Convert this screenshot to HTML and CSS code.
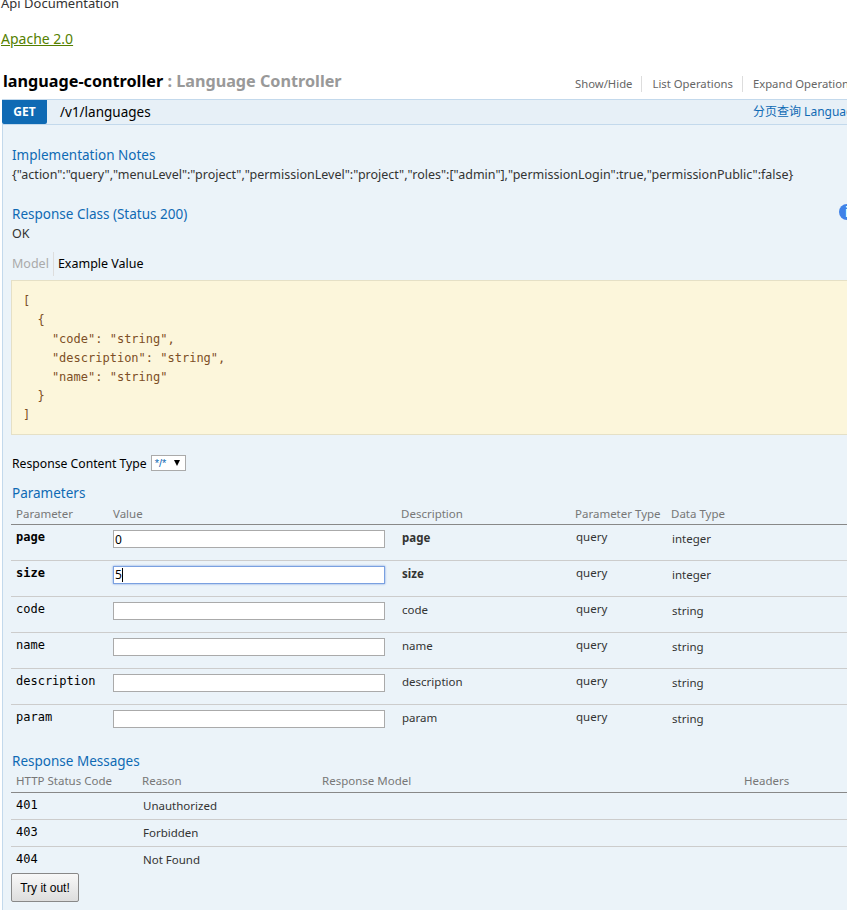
FILE: index.html
```html
<!DOCTYPE html>
<html lang="en">
<head>
    <meta charset="UTF-8">
    <meta name="viewport" content="width=device-width, initial-scale=1.0">
    <title>Api Documentation</title>
    <link rel="stylesheet" href="styles.css">
</head>
<body>
    <div id="swagger-ui">
        <div class="info">
            <div class="info-desc">Api Documentation</div>
            <a class="license" href="#">Apache 2.0</a>
        </div>

        <div class="resource-head">
            <h2><span class="res-name">language-controller</span> <span class="res-desc">: Language Controller</span></h2>
            <ul class="res-links">
                <li>Show/Hide</li>
                <li>List Operations</li>
                <li>Expand Operations</li>
            </ul>
        </div>

        <div class="op-heading">
            <span class="http-method">GET</span>
            <span class="op-path">/v1/languages</span>
            <span class="op-summary">分页查询 Language</span>
        </div>

        <div class="op-content">
            <h4>Implementation Notes</h4>
            <p class="notes">{"action":"query","menuLevel":"project","permissionLevel":"project","roles":["admin"],"permissionLogin":true,"permissionPublic":false}</p>

            <h4 class="response-class">Response Class (Status 200)</h4>
            <p class="status-text">OK</p>
            <span class="info-icon">i</span>

            <div class="sig-tabs">
                <span class="sig-tab off">Model</span>
                <span class="sig-tab">Example Value</span>
            </div>
            <pre class="snippet">[
  {
    "code": "string",
    "description": "string",
    "name": "string"
  }
]</pre>

            <div class="content-type">
                <label>Response Content Type</label>
                <span class="fake-select">*/* <i class="arrow"></i></span>
            </div>

            <h4 class="params-title">Parameters</h4>
            <table class="params">
                <colgroup>
                    <col class="c-name"><col class="c-value"><col class="c-desc"><col class="c-ptype"><col>
                </colgroup>
                <thead>
                    <tr><th>Parameter</th><th>Value</th><th>Description</th><th>Parameter Type</th><th>Data Type</th></tr>
                </thead>
                <tbody>
                    <tr class="required">
                        <td class="code">page</td>
                        <td><input type="text" value="0"></td>
                        <td class="desc">page</td><td class="ptype">query</td><td class="dtype">integer</td>
                    </tr>
                    <tr class="required">
                        <td class="code">size</td>
                        <td><div class="input-focus">5<span class="caret"></span></div></td>
                        <td class="desc">size</td><td class="ptype">query</td><td class="dtype">integer</td>
                    </tr>
                    <tr>
                        <td class="code">code</td>
                        <td><input type="text"></td>
                        <td class="desc">code</td><td class="ptype">query</td><td class="dtype">string</td>
                    </tr>
                    <tr>
                        <td class="code">name</td>
                        <td><input type="text"></td>
                        <td class="desc">name</td><td class="ptype">query</td><td class="dtype">string</td>
                    </tr>
                    <tr>
                        <td class="code">description</td>
                        <td><input type="text"></td>
                        <td class="desc">description</td><td class="ptype">query</td><td class="dtype">string</td>
                    </tr>
                    <tr>
                        <td class="code">param</td>
                        <td><input type="text"></td>
                        <td class="desc">param</td><td class="ptype">query</td><td class="dtype">string</td>
                    </tr>
                </tbody>
            </table>

            <h4 class="messages-title">Response Messages</h4>
            <table class="messages">
                <colgroup>
                    <col class="c-code"><col class="c-reason"><col class="c-model"><col>
                </colgroup>
                <thead>
                    <tr><th>HTTP Status Code</th><th>Reason</th><th>Response Model</th><th>Headers</th></tr>
                </thead>
                <tbody>
                    <tr><td class="code">401</td><td class="desc">Unauthorized</td><td></td><td></td></tr>
                    <tr><td class="code">403</td><td class="desc">Forbidden</td><td></td><td></td></tr>
                    <tr><td class="code">404</td><td class="desc">Not Found</td><td></td><td></td></tr>
                </tbody>
            </table>
            <button class="try-btn">Try it out!</button>
        </div>
    </div>
</body>
</html>
```

FILE: styles.css
```css
html, body {
    margin: 0;
    padding: 0;
    height: 910px;
    overflow: hidden;
    background-color: #fff;
}

body {
    font-family: "Noto Sans", "Noto Sans CJK SC", sans-serif;
    font-size: 12.5px;
    color: #333;
}

#swagger-ui {
    width: 960px;
    margin-top: -7px;
}

.info {
    padding-left: 1px;
    font-size: 13px;
}

.info-desc {
    line-height: 20px;
    height: 20px;
}

.license {
    display: inline-block;
    margin-top: 16px;
    line-height: 20px;
    font-size: 14px;
    color: #547f00;
}

.resource-head {
    display: flex;
    align-items: flex-end;
    height: 33px;
    margin-top: 17px;
    padding-left: 3px;
}

.resource-head h2 {
    margin: 0;
    width: 572px;
    font-size: 16.2px;
    line-height: 24px;
    padding-bottom: 6px;
    font-weight: 700;
    color: #000;
}

.res-desc {
    color: #999;
}

.res-links {
    display: flex;
    list-style: none;
    margin: 0 0 7px;
    padding: 0;
    color: #666;
    font-size: 11.3px;
    line-height: 16px;
}

.res-links li {
    padding-right: 9px;
    margin-right: 10px;
    border-right: 1px solid #ddd;
}

.res-links li:last-child {
    border-right: none;
}

.op-heading {
    display: flex;
    align-items: stretch;
    height: 24px;
    margin-left: 2px;
    background-color: #e7f0f7;
    border-top: 1px solid #c3d9ec;
    border-bottom: 1px solid #c3d9ec;
}

.http-method {
    width: 45px;
    text-align: center;
    background-color: #0f6ab4;
    color: #fff;
    font-weight: 700;
    font-size: 12px;
    line-height: 24px;
    border-radius: 0 0 2px 2px;
}

.op-path {
    width: 693px;
    padding-left: 13px;
    color: #000;
    font-size: 13.5px;
    line-height: 24px;
}

.op-summary {
    color: #0f6ab4;
    font-size: 12px;
    line-height: 24px;
    white-space: nowrap;
}

.op-content {
    position: relative;
    margin-left: 2px;
    padding: 21px 0 0 9px;
    height: 800px;
    background-color: #ebf3f9;
    border-left: 1px solid #c3d9ec;
}

.op-content h4 {
    margin: 0;
    font-size: 13.5px;
    font-weight: 400;
    line-height: 18px;
    color: #0f6ab4;
}

.notes {
    margin: 2px 0 0;
    line-height: 18px;
    color: #333;
    white-space: nowrap;
}

.op-content .response-class {
    margin-top: 21px;
}

.status-text {
    margin: 2px 0 0;
    line-height: 18px;
}

.info-icon {
    position: absolute;
    left: 836px;
    top: 79px;
    width: 16px;
    height: 16px;
    border-radius: 50%;
    background-color: #3f82e8;
    color: #fff;
    font: 700 14px/16px "Liberation Sans", sans-serif;
    text-align: center;
}

.sig-tabs {
    display: flex;
    margin-top: 9px;
    height: 24px;
    line-height: 24px;
}

.sig-tab {
    color: #000;
    padding-left: 4px;
}

.sig-tab.off {
    color: #aaa;
    padding-left: 0;
    padding-right: 4px;
    border-right: 1px solid #ddd;
}

.snippet {
    margin: 4px 0 0 -1px;
    width: 880px;
    height: 155px;
    box-sizing: border-box;
    padding: 11px 11px;
    background-color: #fcf6db;
    border: 1px solid #e5e0c6;
    font-family: "DejaVu Sans Mono", monospace;
    font-size: 12px;
    line-height: 19px;
    color: #7d4f26;
}

.content-type {
    display: flex;
    align-items: center;
    margin-top: 19px;
    height: 18px;
    font-size: 12.2px;
    color: #000;
}

.fake-select {
    box-sizing: border-box;
    display: flex;
    align-items: center;
    justify-content: space-between;
    width: 35px;
    height: 16px;
    margin-left: 4px;
    padding: 0 5px 0 3px;
    background-color: #fff;
    border: 1px solid #aaa;
    font-family: "Liberation Sans", sans-serif;
    font-size: 11px;
    color: #0f6ab4;
}

.arrow {
    width: 0;
    height: 0;
    border-left: 3.5px solid transparent;
    border-right: 3.5px solid transparent;
    border-top: 6px solid #000;
}

.op-content .params-title {
    margin-top: 12px;
}

table {
    width: 880px;
    margin-left: -1px;
    table-layout: fixed;
    border-collapse: collapse;
}

th {
    padding: 0 0 0 5px;
    height: 22px;
    text-align: left;
    font-weight: 400;
    font-size: 11.5px;
    color: #777;
    border-bottom: 1px solid #888;
}

.params td {
    box-sizing: border-box;
    height: 36px;
    padding: 0 0 0 5px;
    vertical-align: top;
    border-bottom: 1px solid #ccc;
}

.params tbody tr:last-child td {
    border-bottom: none;
}

.c-name { width: 97px; }
.c-value { width: 288px; }
.c-desc { width: 174px; }
.c-ptype { width: 96px; }

td.code {
    font-family: "DejaVu Sans Mono", monospace;
    font-size: 12px;
    line-height: 16px;
    color: #000;
}

.params td.code, .messages td.code {
    padding-top: 4px;
}

.params td.desc, .params td.ptype, .params td.dtype {
    padding-left: 6px;
    font-size: 11.5px;
    line-height: 16px;
}

.params td.desc {
    padding-top: 5px;
}

.params td.ptype {
    padding-top: 4px;
}

.params td.dtype {
    padding-top: 6px;
}

.required td.code, .required td.desc {
    font-weight: 700;
}

.params input, .input-focus {
    display: block;
    box-sizing: border-box;
    width: 272px;
    height: 18px;
    margin: 5px 0 0;
    padding: 0 1px;
    background-color: #fff;
    border: 1px solid #aaa;
    border-radius: 0;
    font-family: "Noto Sans", sans-serif;
    font-size: 12px;
    line-height: 16px;
    color: #000;
}

.input-focus {
    border-color: #7aa0e0;
    box-shadow: 0 0 2px #7aa0e0;
}

.caret {
    display: inline-block;
    width: 1px;
    height: 14px;
    vertical-align: -3px;
    background-color: #000;
}

.op-content .messages-title {
    margin-top: 11px;
}

.messages td {
    box-sizing: border-box;
    height: 27px;
    padding: 0 0 0 5px;
    vertical-align: top;
    border-bottom: 1px solid #ccc;
}

.messages tbody tr:last-child td {
    border-bottom: none;
}

.c-code { width: 126px; }
.c-reason { width: 180px; }
.c-model { width: 422px; }

.messages td.desc {
    padding: 5px 0 0 6px;
    font-size: 11.5px;
    line-height: 16px;
}

.try-btn {
    display: block;
    box-sizing: border-box;
    width: 68px;
    height: 29px;
    margin-left: -1px;
    padding: 0;
    background: linear-gradient(#f8f8f8, #dddddd);
    border: 1px solid #888;
    border-radius: 2px;
    font-family: "Liberation Sans", sans-serif;
    font-size: 12px;
    color: #000;
}
```
